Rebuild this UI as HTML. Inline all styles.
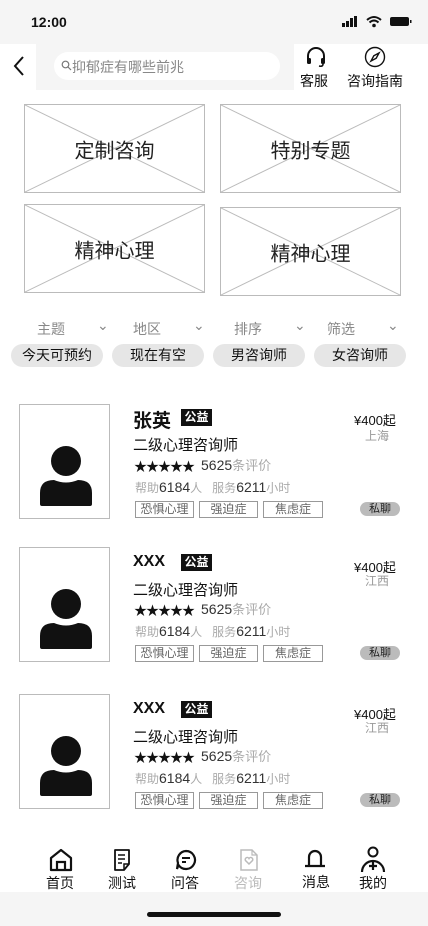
<!DOCTYPE html>
<html><head><meta charset="utf-8"><style>
*{margin:0;padding:0;box-sizing:border-box}
body{width:428px;height:926px;background:#fff;font-family:"Liberation Sans","Noto Sans CJK SC",sans-serif;color:#111;position:relative;overflow:hidden}
.a{position:absolute}
.ph{position:absolute;border:1px solid #bbb;background:#fff}
.ph svg{position:absolute;left:0;top:0}
.ph span{position:absolute;left:0;right:0;top:50%;transform:translateY(-50%);text-align:center;font-size:20px;color:#222}
.dd{font-size:14px;color:#888}
.chip{position:absolute;top:344px;height:23px;background:#e6e6e6;border-radius:12px;font-size:14px;text-align:center;line-height:23px;color:#111}
.tag{position:absolute;height:17px;border:1px solid #999;font-size:12px;color:#666;text-align:center;line-height:15px}
.gr{color:#aaa}
</style></head><body>
<div class="a" style="left:0;top:0;width:428px;height:44px;background:#f5f5f5"></div>
<div class="a" style="left:31px;top:14px;font-size:14px;font-weight:bold">12:00</div>
<svg class="a" style="left:342px;top:15px" width="70" height="14" viewBox="0 0 70 14">
<rect x="0" y="8" width="3" height="4" fill="#111"/><rect x="4" y="6" width="3" height="6" fill="#111"/><rect x="8" y="3" width="3" height="9" fill="#111"/><rect x="12" y="1" width="3" height="11" fill="#111"/>
<path d="M25 5 Q32 -1 39 5" stroke="#111" stroke-width="2" fill="none"/><path d="M27.5 7.5 Q32 3.5 36.5 7.5" stroke="#111" stroke-width="2" fill="none"/><circle cx="32" cy="10.5" r="1.8" fill="#111"/>
<rect x="48" y="2" width="19" height="9" rx="2" fill="#111"/><rect x="68" y="5" width="1.5" height="3" fill="#111"/>
</svg>
<div class="a" style="left:0;top:44px;width:428px;height:46px;background:#fff"></div>
<div class="a" style="left:36px;top:44px;width:258px;height:46px;background:#f5f5f5"></div>
<svg class="a" style="left:12px;top:55px" width="14" height="22"><path d="M11 2 L3 11 L11 20" stroke="#111" stroke-width="2" fill="none"/></svg>
<div class="a" style="left:54px;top:52px;width:226px;height:28px;background:#fff;border-radius:14px"></div>
<svg class="a" style="left:61px;top:60px" width="11" height="11"><circle cx="4.5" cy="4.5" r="3.3" stroke="#777" stroke-width="1.2" fill="none"/><path d="M7 7 L10 10" stroke="#777" stroke-width="1.2"/></svg>
<div class="a" style="left:72px;top:57px;font-size:14px;color:#888">抑郁症有哪些前兆</div>
<svg class="a" style="left:305px;top:47px" width="22" height="20" viewBox="0 0 22 20"><path d="M3 13 V9 A8 8 0 0 1 19 9 V13" stroke="#111" stroke-width="2" fill="none"/><rect x="2" y="11" width="4" height="6" rx="1.5" fill="#111"/><rect x="16" y="11" width="4" height="6" rx="1.5" fill="#111"/><path d="M18 17 Q18 20 14 19" stroke="#111" stroke-width="1.6" fill="none"/></svg>
<div class="a" style="left:300px;top:71px;font-size:14px">客服</div>
<svg class="a" style="left:364px;top:46px" width="22" height="22" viewBox="0 0 22 22"><circle cx="11" cy="11" r="9.5" stroke="#111" stroke-width="1.4" fill="none"/><path d="M15 7 L12.2 12.2 L7 15 L9.8 9.8 Z" stroke="#111" stroke-width="1.4" fill="none"/></svg>
<div class="a" style="left:347px;top:71px;font-size:14px">咨询指南</div>

<div class="ph" style="left:24px;top:104px;width:181px;height:89px"><svg width="179" height="87"><path d="M0 0 L179 87 M179 0 L0 87" stroke="#bbb"/></svg><span>定制咨询</span></div>
<div class="ph" style="left:220px;top:104px;width:181px;height:89px"><svg width="179" height="87"><path d="M0 0 L179 87 M179 0 L0 87" stroke="#bbb"/></svg><span>特别专题</span></div>
<div class="ph" style="left:24px;top:204px;width:181px;height:89px"><svg width="179" height="87"><path d="M0 0 L179 87 M179 0 L0 87" stroke="#bbb"/></svg><span>精神心理</span></div>
<div class="ph" style="left:220px;top:207px;width:181px;height:89px"><svg width="179" height="87"><path d="M0 0 L179 87 M179 0 L0 87" stroke="#bbb"/></svg><span>精神心理</span></div>

<div class="a dd" style="left:37px;top:319px">主题</div><div class="a dd" style="left:97px;top:317px">⌄</div>
<div class="a dd" style="left:133px;top:319px">地区</div><div class="a dd" style="left:193px;top:317px">⌄</div>
<div class="a dd" style="left:234px;top:319px">排序</div><div class="a dd" style="left:294px;top:317px">⌄</div>
<div class="a dd" style="left:327px;top:319px">筛选</div><div class="a dd" style="left:387px;top:317px">⌄</div>
<div class="chip" style="left:11px;width:92px">今天可预约</div>
<div class="chip" style="left:112px;width:92px">现在有空</div>
<div class="chip" style="left:213px;width:92px">男咨询师</div>
<div class="chip" style="left:314px;width:92px">女咨询师</div>

<!-- cards -->
<div id="cards"></div>
<script></script>

<!-- card template repeated -->
<div class="a" style="left:0;top:404px;width:428px;height:120px">
<div class="ph" style="left:19px;top:0;width:91px;height:115px"><svg width="89" height="113"><circle cx="46" cy="56" r="15" fill="#111"/><path d="M20 99 V88 Q20 75 34 75 Q46 80 58 75 Q72 75 72 88 V99 Q72 101 70 101 H22 Q20 101 20 99Z" fill="#111"/></svg></div>
<div class="a" style="left:133px;top:2px;font-size:19px;font-weight:bold">张英</div>
<div class="a" style="left:181px;top:5px;width:31px;height:17px;background:#111;color:#fff;font-size:12px;font-weight:bold;text-align:center;line-height:17px">公益</div>
<div class="a" style="left:133px;top:30px;font-size:15px">二级心理咨询师</div>
<div class="a" style="left:134px;top:52px;font-size:13px;letter-spacing:-1px">★★★★★</div>
<div class="a" style="left:201px;top:51px;font-size:14px;color:#333">5625<span class="gr" style="font-size:13px">条评价</span></div>
<div class="a" style="left:135px;top:75px;font-size:12px;color:#aaa">帮助<span style="font-size:14px;color:#333">6184</span>人&nbsp;&nbsp;&nbsp;服务<span style="font-size:14px;color:#333">6211</span>小时</div>
<div class="tag" style="left:135px;top:97px;width:59px">恐惧心理</div>
<div class="tag" style="left:199px;top:97px;width:59px">强迫症</div>
<div class="tag" style="left:263px;top:97px;width:60px">焦虑症</div>
<div class="a" style="left:354px;top:6px;font-size:13px">¥400起</div>
<div class="a" style="left:365px;top:23px;font-size:12px;color:#999">上海</div>
<div class="a" style="left:360px;top:98px;width:40px;height:14px;background:#bbb;border-radius:7px;font-size:11px;text-align:center;line-height:14px;color:#222">私聊</div>
</div>

<div class="a" style="left:0;top:547px;width:428px;height:120px">
<div class="ph" style="left:19px;top:0;width:91px;height:115px"><svg width="89" height="113"><circle cx="46" cy="56" r="15" fill="#111"/><path d="M20 99 V88 Q20 75 34 75 Q46 80 58 75 Q72 75 72 88 V99 Q72 101 70 101 H22 Q20 101 20 99Z" fill="#111"/></svg></div>
<div class="a" style="left:133px;top:6px;font-size:16px;font-weight:bold">XXX</div>
<div class="a" style="left:181px;top:7px;width:31px;height:17px;background:#111;color:#fff;font-size:12px;font-weight:bold;text-align:center;line-height:17px">公益</div>
<div class="a" style="left:133px;top:32px;font-size:15px">二级心理咨询师</div>
<div class="a" style="left:134px;top:53px;font-size:13px;letter-spacing:-1px">★★★★★</div>
<div class="a" style="left:201px;top:52px;font-size:14px;color:#333">5625<span class="gr" style="font-size:13px">条评价</span></div>
<div class="a" style="left:135px;top:76px;font-size:12px;color:#aaa">帮助<span style="font-size:14px;color:#333">6184</span>人&nbsp;&nbsp;&nbsp;服务<span style="font-size:14px;color:#333">6211</span>小时</div>
<div class="tag" style="left:135px;top:98px;width:59px">恐惧心理</div>
<div class="tag" style="left:199px;top:98px;width:59px">强迫症</div>
<div class="tag" style="left:263px;top:98px;width:60px">焦虑症</div>
<div class="a" style="left:354px;top:10px;font-size:13px">¥400起</div>
<div class="a" style="left:365px;top:25px;font-size:12px;color:#999">江西</div>
<div class="a" style="left:360px;top:99px;width:40px;height:14px;background:#bbb;border-radius:7px;font-size:11px;text-align:center;line-height:14px;color:#222">私聊</div>
</div>

<div class="a" style="left:0;top:694px;width:428px;height:120px">
<div class="ph" style="left:19px;top:0;width:91px;height:115px"><svg width="89" height="113"><circle cx="46" cy="56" r="15" fill="#111"/><path d="M20 99 V88 Q20 75 34 75 Q46 80 58 75 Q72 75 72 88 V99 Q72 101 70 101 H22 Q20 101 20 99Z" fill="#111"/></svg></div>
<div class="a" style="left:133px;top:6px;font-size:16px;font-weight:bold">XXX</div>
<div class="a" style="left:181px;top:7px;width:31px;height:17px;background:#111;color:#fff;font-size:12px;font-weight:bold;text-align:center;line-height:17px">公益</div>
<div class="a" style="left:133px;top:32px;font-size:15px">二级心理咨询师</div>
<div class="a" style="left:134px;top:53px;font-size:13px;letter-spacing:-1px">★★★★★</div>
<div class="a" style="left:201px;top:52px;font-size:14px;color:#333">5625<span class="gr" style="font-size:13px">条评价</span></div>
<div class="a" style="left:135px;top:76px;font-size:12px;color:#aaa">帮助<span style="font-size:14px;color:#333">6184</span>人&nbsp;&nbsp;&nbsp;服务<span style="font-size:14px;color:#333">6211</span>小时</div>
<div class="tag" style="left:135px;top:98px;width:59px">恐惧心理</div>
<div class="tag" style="left:199px;top:98px;width:59px">强迫症</div>
<div class="tag" style="left:263px;top:98px;width:60px">焦虑症</div>
<div class="a" style="left:354px;top:10px;font-size:13px">¥400起</div>
<div class="a" style="left:365px;top:25px;font-size:12px;color:#999">江西</div>
<div class="a" style="left:360px;top:99px;width:40px;height:14px;background:#bbb;border-radius:7px;font-size:11px;text-align:center;line-height:14px;color:#222">私聊</div>
</div>

<!-- tab bar -->
<svg class="a" style="left:49px;top:848px" width="24" height="24" viewBox="0 0 24 24"><path d="M2 10 L12 2 L22 10 V22 H2 Z" stroke="#111" stroke-width="2.2" fill="none" stroke-linejoin="round"/><path d="M8 22 V14 H16 V22" stroke="#111" stroke-width="2.2" fill="none"/></svg>
<div class="a" style="left:46px;top:873px;font-size:14px">首页</div>
<svg class="a" style="left:112px;top:848px" width="22" height="24" viewBox="0 0 22 24"><path d="M3 2 H17 V16 L12 22 H3 Z" stroke="#111" stroke-width="1.8" fill="none" stroke-linejoin="round"/><path d="M12 22 V16 H17" stroke="#111" stroke-width="1.5" fill="none"/><path d="M6 7 H13 M6 11 H13 M6 15 H10" stroke="#111" stroke-width="1.5"/></svg>
<div class="a" style="left:108px;top:873px;font-size:14px">测试</div>
<svg class="a" style="left:175px;top:849px" width="22" height="22" viewBox="0 0 22 22"><path d="M11 2 A9 9 0 1 1 3.5 16 L2 20 L3 14 A9 9 0 0 1 11 2Z" stroke="#111" stroke-width="2.2" fill="none"/><path d="M7 9 H15 M7 13 H11" stroke="#111" stroke-width="2"/></svg>
<div class="a" style="left:171px;top:873px;font-size:14px">问答</div>
<svg class="a" style="left:239px;top:848px" width="20" height="24" viewBox="0 0 20 24"><path d="M2 2 H13 L18 7 V22 H2 Z" stroke="#bbb" stroke-width="1.5" fill="none"/><path d="M13 2 V7 H18" stroke="#bbb" stroke-width="1.2" fill="none"/><path d="M10 16 L6.5 12.5 A2 2 0 0 1 10 10.5 A2 2 0 0 1 13.5 12.5 Z" stroke="#bbb" stroke-width="1.5" fill="none"/></svg>
<div class="a" style="left:234px;top:873px;font-size:14px;color:#bbb">咨询</div>
<svg class="a" style="left:303px;top:847px" width="24" height="24" viewBox="0 0 24 24"><path d="M6 18 V10 A6 6 0 0 1 18 10 V18" stroke="#111" stroke-width="2.2" fill="none"/><path d="M2 19 H22" stroke="#111" stroke-width="2.2"/></svg>
<div class="a" style="left:302px;top:872px;font-size:14px">消息</div>
<svg class="a" style="left:360px;top:846px" width="26" height="28" viewBox="0 0 26 28"><circle cx="13" cy="6" r="4.5" stroke="#111" stroke-width="2" fill="none"/><path d="M2 26 A11 11 0 0 1 24 26" stroke="#111" stroke-width="2.2" fill="none"/><path d="M13 16 V24 M9 20 H17" stroke="#111" stroke-width="2.2"/></svg>
<div class="a" style="left:359px;top:873px;font-size:14px">我的</div>

<div class="a" style="left:0;top:892px;width:428px;height:34px;background:#f5f5f5"></div>
<div class="a" style="left:147px;top:912px;width:134px;height:5px;background:#111;border-radius:3px"></div>
</body></html>
